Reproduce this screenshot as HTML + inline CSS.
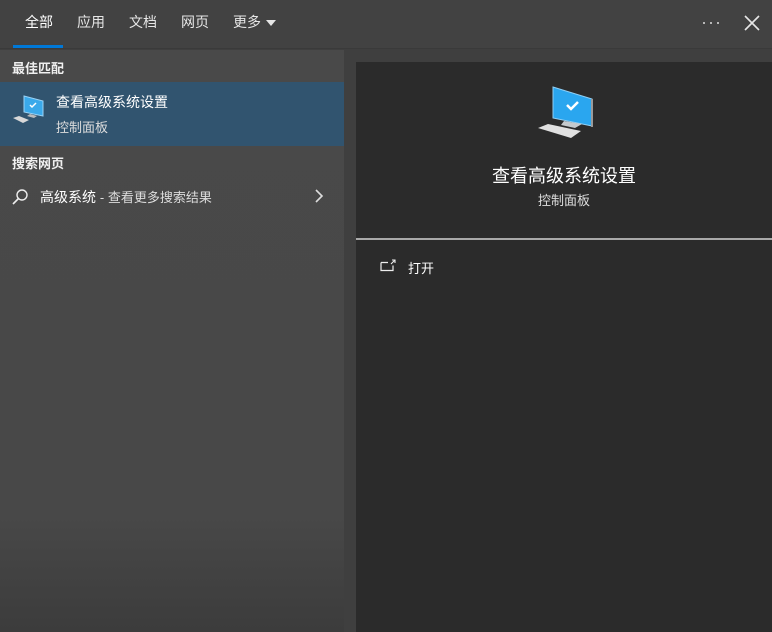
<!DOCTYPE html>
<html><head><meta charset="utf-8"><style>
*{margin:0;padding:0;box-sizing:border-box}
body{width:772px;height:632px;overflow:hidden;background:#3f3f3f;font-family:"Liberation Sans","Noto Sans CJK SC",sans-serif;color:#fff;position:relative}
.top{position:absolute;left:0;top:0;width:772px;height:49px;background:#424242;border-bottom:1px solid #3a3a3a}
.tab{position:absolute;top:12px;font-size:14px;color:#e6e6e6}
.ul{position:absolute;left:13px;top:45px;width:50px;height:3px;background:#0078d7}
.left{position:absolute;left:0;top:50px;width:344px;height:582px;background:linear-gradient(#494949 0,#484848 80%,#3c3c3c 100%)}
.right{position:absolute;left:356px;top:62px;width:416px;height:570px;background:#2b2b2b}
.h{position:absolute;left:12px;font-size:13px;font-weight:bold;color:#f0f0f0}
.sel{position:absolute;left:0;top:82px;width:344px;height:64px;background:#31546f}
</style></head><body>
<div class="top">
<div class="tab" style="left:25px;color:#fff">全部</div>
<div class="tab" style="left:77px">应用</div>
<div class="tab" style="left:129px">文档</div>
<div class="tab" style="left:181px">网页</div>
<div class="tab" style="left:233px">更多</div>
<svg style="position:absolute;left:265px;top:19px" width="12" height="8"><path d="M1 1h10L6 7z" fill="#e6e6e6"/></svg>
<svg style="position:absolute;left:702px;top:21px" width="18" height="4"><circle cx="2" cy="2" r="1" fill="#ddd"/><circle cx="9" cy="2" r="1" fill="#ddd"/><circle cx="16" cy="2" r="1" fill="#ddd"/></svg>
<svg style="position:absolute;left:744px;top:15px" width="16" height="16"><path d="M1 1L15 15M15 1L1 15" stroke="#e6e6e6" stroke-width="1.6"/></svg>
<div class="ul"></div>
</div>
<div class="left"></div>
<div class="h" style="top:58px">最佳匹配</div>
<div class="sel"></div>
<svg style="position:absolute;left:12px;top:95px" width="32" height="30" viewBox="0 0 32 30">
<path d="M12 1L31 6V21L12 17Z" fill="#3aa9ea" stroke="#9ad2f5" stroke-width="1"/>
<path d="M18 10l2 2 4-4" stroke="#fff" stroke-width="1.5" fill="none"/>
<path d="M18 19l7 2-3 2-7-2z" fill="#bbb"/>
<path d="M1 23L7 21L17 25L11 28Z" fill="#d8d8d8"/>
</svg>
<div style="position:absolute;left:56px;top:92px;font-size:14px;color:#fff">查看高级系统设置</div>
<div style="position:absolute;left:56px;top:117px;font-size:13px;color:#ddd">控制面板</div>
<div class="h" style="top:153px">搜索网页</div>
<svg style="position:absolute;left:11px;top:188px" width="18" height="18"><circle cx="11" cy="7" r="5" stroke="#eee" stroke-width="1.4" fill="none"/><path d="M7.5 10.5L2 16" stroke="#eee" stroke-width="1.6"/></svg>
<div style="position:absolute;left:40px;top:187px;font-size:14px;color:#fff">高级系统 <span style="font-size:13px;color:#ddd">- 查看更多搜索结果</span></div>
<svg style="position:absolute;left:314px;top:189px" width="10" height="14"><path d="M2 1l6 6-6 6" stroke="#ddd" stroke-width="1.6" fill="none"/></svg>
<div class="right"></div>
<svg style="position:absolute;left:536px;top:86px" width="60" height="56" viewBox="0 0 60 56">
<path d="M17 1L56 13V40L17 32Z" fill="#2aa6ef" stroke="#8fcff5" stroke-width="1"/>
<path d="M56 13V41" stroke="#9a9a9a" stroke-width="2"/>
<path d="M31 19l4 4 7-7" stroke="#fff" stroke-width="2.5" fill="none"/>
<path d="M28 35l18 3-7 4-14-3z" fill="#c6cacd"/>
<path d="M2 42L12 38L45 45L35 52Z" fill="#e0e0e0"/>
</svg>
<div style="position:absolute;left:356px;top:162px;width:416px;text-align:center;font-size:18px;color:#fff">查看高级系统设置</div>
<div style="position:absolute;left:356px;top:190px;width:416px;text-align:center;font-size:13px;color:#ddd">控制面板</div>
<div style="position:absolute;left:356px;top:238px;width:416px;height:2px;background:#a9a9a9"></div>
<svg style="position:absolute;left:380px;top:259px" width="16" height="13"><path d="M1 3.5h7M1 3.5v8h12v-5" stroke="#eee" stroke-width="1.2" fill="none"/><path d="M15 1l-4 4M12 1h3v3" stroke="#eee" stroke-width="1.1" fill="none"/></svg>
<div style="position:absolute;left:408px;top:258px;font-size:13px;color:#fff">打开</div>
</body></html>
